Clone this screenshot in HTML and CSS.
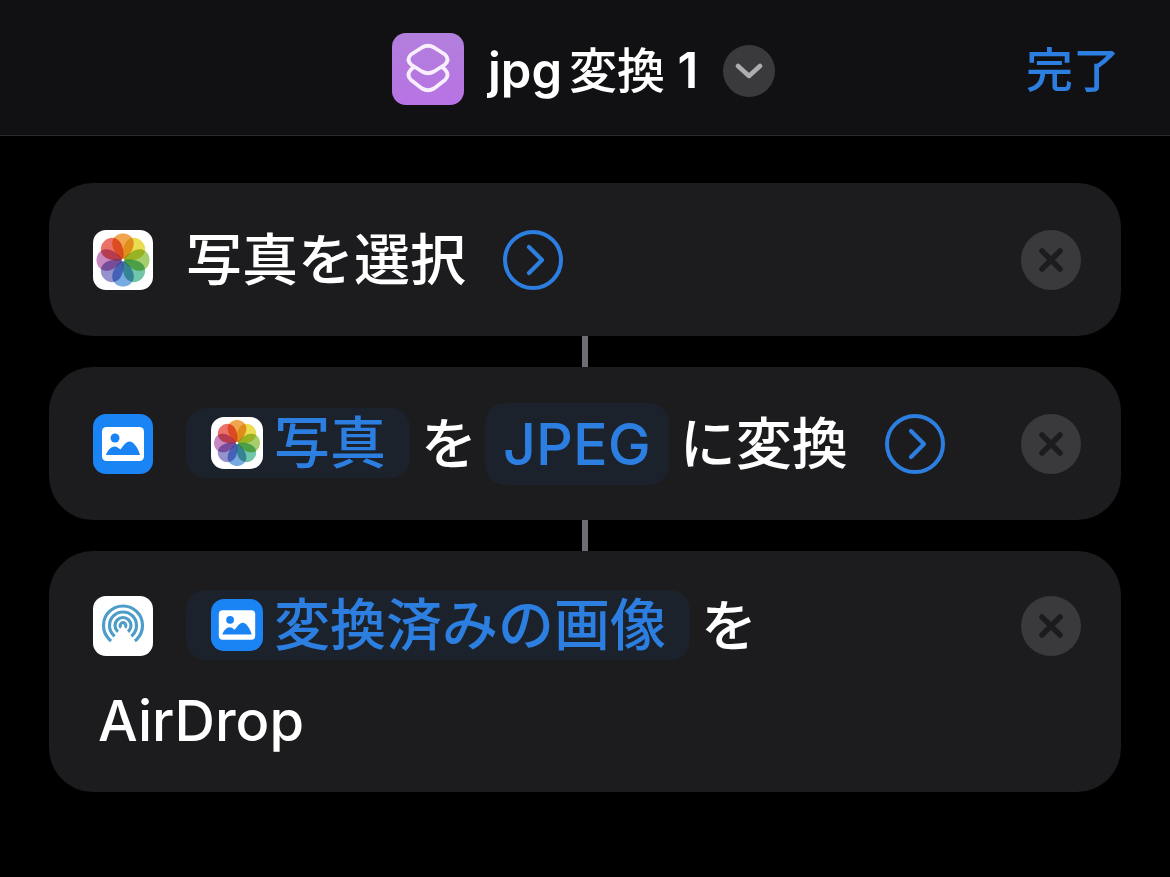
FILE: index.html
```html
<!DOCTYPE html>
<html lang="ja">
<head>
    <meta charset="UTF-8">
    <meta name="viewport" content="width=device-width, initial-scale=1.0">
    <title>jpg変換 1</title>
    <link rel="stylesheet" href="styles.css">
</head>
<body>
    <!-- Reusable icons -->
    <svg class="defs" width="0" height="0" aria-hidden="true">
        <defs>
            <path id="petal" d="M30 30C22 24 18 17 19.500 11C20.800 6 25.500 3.500 30 3.500C34.500 3.500 39.200 6 40.500 11C42 17 38 24 30 30Z"/>
            <symbol id="flower" viewBox="0 0 60 60">
                <g class="petals">
                    <use href="#petal" fill="#f2a54f"/>
                    <use href="#petal" fill="#ebdc52" transform="rotate(45 30 30)"/>
                    <use href="#petal" fill="#a6ce6b" transform="rotate(90 30 30)"/>
                    <use href="#petal" fill="#71c5a9" transform="rotate(135 30 30)"/>
                    <use href="#petal" fill="#77abe2" transform="rotate(180 30 30)"/>
                    <use href="#petal" fill="#9692ce" transform="rotate(225 30 30)"/>
                    <use href="#petal" fill="#c787c0" transform="rotate(270 30 30)"/>
                    <use href="#petal" fill="#ea7269" transform="rotate(315 30 30)"/>
                </g>
                <circle cx="30" cy="30" r="1.500" fill="#fff"/>
            </symbol>
            <symbol id="picture" viewBox="0 0 60 60">
                <rect x="9" y="13" width="42" height="34" rx="4.500" fill="#fff"/>
                <circle cx="22" cy="24" r="4.500" fill="#1b84f5"/>
                <path d="M13 41C14.500 36.500 18 32.500 21.500 32.500C24 32.500 25.500 34 27.500 35.500C30 32 33 27.500 36.500 27.500C41 27.500 45.500 35 47 41Z" fill="#1b84f5"/>
            </symbol>
            <symbol id="go" viewBox="0 0 60 60">
                <circle cx="30" cy="30" r="28" fill="none" stroke="#2c7fe0" stroke-width="4"/>
                <path d="M26 17L39 30L26 43" fill="none" stroke="#2c7fe0" stroke-width="4.200" stroke-linecap="round" stroke-linejoin="round"/>
            </symbol>
            <symbol id="close" viewBox="0 0 60 60">
                <circle cx="30" cy="30" r="30" fill="#3a3a3c"/>
                <path d="M21 21L39 39M39 21L21 39" fill="none" stroke="#1c1c1e" stroke-width="5.500" stroke-linecap="round"/>
            </symbol>
        </defs>
    </svg>

    <header class="topbar">
        <div class="title-group">
            <div class="app-icon">
                <svg width="72" height="72" viewBox="0 0 72 72">
                    <path d="M30 14.500Q36 11 42 14.500L53 21.500Q58 26.500 53 31.500L42 38.500Q36 42 30 38.500L19 31.500Q14 26.500 19 21.500Z" fill="none" stroke="#f8eefc" stroke-width="3.800" stroke-linejoin="round"/>
                    <path d="M22 34L19 36.500Q14 42 19 47L30 55.500Q36 59 42 55.500L53 47Q58 42 53 36.500L50 34" fill="none" stroke="#f8eefc" stroke-width="3.800" stroke-linejoin="round"/>
                </svg>
            </div>
            <h1 class="title">jpg<span class="title-jp">変換</span> 1</h1>
            <span class="chevron-btn">
                <svg width="28" height="18" viewBox="0 0 28 18">
                    <path d="M3 4L14 14L25 4" fill="none" stroke="#aeaeb2" stroke-width="4.500" stroke-linecap="round" stroke-linejoin="round"/>
                </svg>
            </span>
        </div>
        <a class="done">完了</a>
    </header>

    <main class="actions">
        <!-- 写真を選択 -->
        <section class="card">
            <div class="card-body">
                <div class="row">
                    <svg class="icon white-tile" width="60" height="60"><use href="#flower"/></svg>
                    <span class="label first">写真を選択</span>
                    <svg class="go" width="60" height="60"><use href="#go"/></svg>
                </div>
            </div>
            <svg class="close" width="60" height="60"><use href="#close"/></svg>
        </section>
        <div class="connector"></div>

        <!-- 変換 -->
        <section class="card">
            <div class="card-body">
                <div class="row">
                    <svg class="icon blue-tile" width="60" height="60"><use href="#picture"/></svg>
                    <span class="token token-var first">
                        <svg class="token-icon white-tile" width="52" height="52"><use href="#flower"/></svg>写真
                    </span>
                    <span class="label joiner">を</span>
                    <span class="token token-text">JPEG</span>
                    <span class="label joiner">に変換</span>
                    <svg class="go" width="60" height="60"><use href="#go"/></svg>
                </div>
            </div>
            <svg class="close" width="60" height="60"><use href="#close"/></svg>
        </section>
        <div class="connector"></div>

        <!-- AirDrop -->
        <section class="card card-tall">
            <div class="card-body">
                <div class="row">
                    <svg class="icon white-tile" width="60" height="60" viewBox="0 0 60 60">
                        <g fill="none" stroke="#4e9dc9" stroke-width="3.200">
                            <circle cx="30" cy="29.500" r="19.500"/>
                            <circle cx="30" cy="29.500" r="13.500"/>
                            <circle cx="30" cy="29.500" r="8"/>
                            <circle cx="30" cy="29.500" r="2.800"/>
                        </g>
                        <path d="M30 29L50 56H10Z" fill="#fff"/>
                    </svg>
                    <span class="token token-var first">
                        <svg class="token-icon blue-tile" width="52" height="52"><use href="#picture"/></svg>変換済みの画像
                    </span>
                    <span class="label joiner">を</span>
                </div>
                <div class="label second-line">AirDrop</div>
            </div>
            <svg class="close" width="60" height="60"><use href="#close"/></svg>
        </section>
    </main>
</body>
</html>
```

FILE: styles.css
```css
body {
    margin: 0;
    background-color: #000;
    color: #fff;
    font-family: "Inter", "Noto Sans CJK JP", sans-serif;
    overflow: hidden;
}

.defs {
    position: absolute;
}

.petals {
    isolation: isolate;
}

.petals use {
    mix-blend-mode: multiply;
}

/* Top bar */
.topbar {
    height: 136px;
    box-sizing: border-box;
    display: flex;
    align-items: center;
    padding: 3px 50px 0 392px;
    background-color: #111113;
    border-bottom: 1px solid #2b2b2d;
}

.title-group {
    display: flex;
    align-items: center;
    flex: 1;
}

.app-icon {
    width: 72px;
    height: 72px;
    border-radius: 14px;
    background: linear-gradient(#b27fdc, #b873e4);
}

.app-icon svg {
    display: block;
}

.title {
    margin: 3px 0 0 24px;
    font-size: 49px;
    font-weight: 600;
    line-height: 72px;
}

.title-jp {
    font-size: 48px;
    font-weight: 500;
    margin-left: 7px;
}

.chevron-btn {
    width: 52px;
    height: 52px;
    margin: 3px 0 0 25px;
    border-radius: 50%;
    background-color: #3a3a3c;
    display: flex;
    align-items: center;
    justify-content: center;
}

.done {
    margin-top: -6px;
    color: #2c7fe0;
    font-size: 47px;
    font-weight: 500;
}

/* Action cards */
.actions {
    padding: 47px 49px 0;
}

.card {
    display: flex;
    align-items: flex-start;
    padding: 47px 40px 46px 44px;
    background-color: #1c1c1e;
    border-radius: 44px;
}

.card-tall {
    padding-top: 45px;
    padding-bottom: 36px;
}

.card-body {
    flex: 1;
    min-width: 0;
}

.row {
    display: flex;
    align-items: center;
    height: 60px;
}

.connector {
    width: 6px;
    height: 31px;
    margin: 0 auto;
    background-color: #6d6d75;
}

.icon,
.close,
.go,
.token-icon {
    flex: none;
    display: block;
}

.white-tile {
    background-color: #fff;
    border-radius: 13px;
}

.blue-tile {
    background-color: #1b84f5;
    border-radius: 13px;
}

.label {
    font-size: 56px;
    font-weight: 500;
    line-height: 70px;
    white-space: nowrap;
}

.first {
    margin-left: 33px;
}

.joiner {
    margin-left: 11px;
}

.go {
    margin-left: 37px;
}

.second-line {
    margin: 30px 0 0 5px;
    font-size: 56px;
    font-weight: 500;
}

/* Tokens inside a sentence */
.token {
    display: flex;
    align-items: center;
    box-sizing: border-box;
    background-color: #1b222c;
    border-radius: 20px;
    color: #2c7fe0;
    font-size: 56px;
    font-weight: 500;
    line-height: 70px;
    white-space: nowrap;
}

.token-var {
    height: 70px;
    margin-bottom: 3px;
    padding: 0 24px 0 25px;
}

.token-text {
    height: 82px;
    padding: 0 18px;
    margin-left: 8px;
    font-size: 57.500px;
    font-weight: 500;
}

.token-icon {
    margin-right: 11px;
}
```
